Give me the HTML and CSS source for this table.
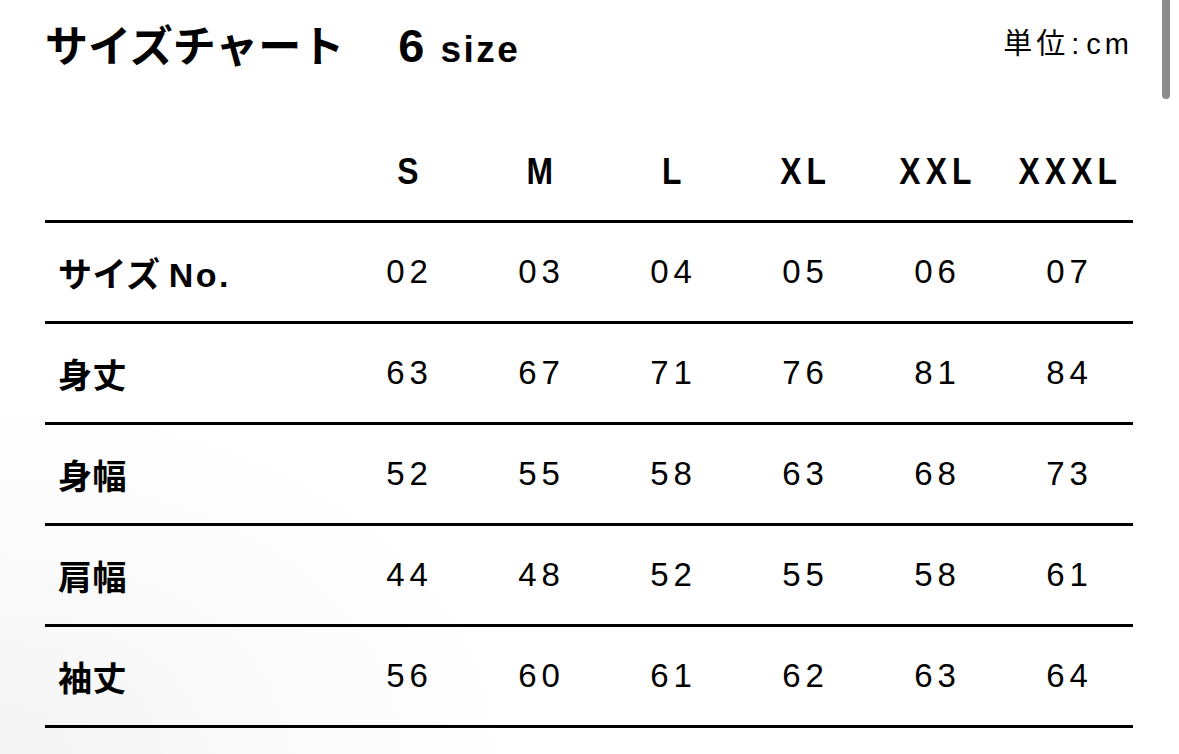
FILE: index.html
```html
<!DOCTYPE html>
<html lang="ja">
<head>
<meta charset="utf-8">
<title>サイズチャート</title>
<link rel="stylesheet" href="styles.css">
</head>
<body>
<div class="page">
  <header class="title-row">
    <h1 class="title"><span class="title-jp">サイズチャート</span><span class="title-count">6</span><span class="title-size">size</span></h1>
    <div class="unit">単位<span class="colon">:</span>cm</div>
  </header>
  <div class="chart">
    <div class="row head">
      <div class="label"></div>
      <div class="cell"><span class="narrow">S</span></div>
      <div class="cell"><span class="narrow">M</span></div>
      <div class="cell"><span class="narrow">L</span></div>
      <div class="cell"><span class="narrow">XL</span></div>
      <div class="cell"><span class="narrow">XXL</span></div>
      <div class="cell"><span class="narrow">XXXL</span></div>
    </div>
    <div class="row">
      <div class="label">サイズ <span class="latin">No.</span></div>
      <div class="cell">02</div>
      <div class="cell">03</div>
      <div class="cell">04</div>
      <div class="cell">05</div>
      <div class="cell">06</div>
      <div class="cell">07</div>
    </div>
    <div class="row">
      <div class="label">身丈</div>
      <div class="cell">63</div>
      <div class="cell">67</div>
      <div class="cell">71</div>
      <div class="cell">76</div>
      <div class="cell">81</div>
      <div class="cell">84</div>
    </div>
    <div class="row">
      <div class="label">身幅</div>
      <div class="cell">52</div>
      <div class="cell">55</div>
      <div class="cell">58</div>
      <div class="cell">63</div>
      <div class="cell">68</div>
      <div class="cell">73</div>
    </div>
    <div class="row">
      <div class="label">肩幅</div>
      <div class="cell">44</div>
      <div class="cell">48</div>
      <div class="cell">52</div>
      <div class="cell">55</div>
      <div class="cell">58</div>
      <div class="cell">61</div>
    </div>
    <div class="row">
      <div class="label">袖丈</div>
      <div class="cell">56</div>
      <div class="cell">60</div>
      <div class="cell">61</div>
      <div class="cell">62</div>
      <div class="cell">63</div>
      <div class="cell">64</div>
    </div>
  </div>
  <div class="scrollbar"></div>
</div>
</body>
</html>
```

FILE: styles.css
```css
html, body {
  margin: 0;
  padding: 0;
}
body {
  width: 1179px;
  height: 754px;
  overflow: hidden;
  font-family: "Liberation Sans", "Noto Sans CJK JP", sans-serif;
  color: #000;
  background:
    radial-gradient(ellipse 520px 360px at 0% 100%, rgba(0,0,0,0.045), rgba(0,0,0,0) 100%),
    #fff;
}
.page {
  position: relative;
  height: 754px;
  padding: 0 46px 0 45px;
  box-sizing: border-box;
}
.title-row {
  display: flex;
  justify-content: space-between;
  align-items: flex-start;
  height: 124px;
}
.title {
  margin: 0;
  padding-top: 19px;
  line-height: 48px;
  font-weight: bold;
  display: flex;
  align-items: baseline;
}
.title-jp {
  font-size: 43px;
  font-family: "Noto Sans CJK JP", sans-serif;
  font-weight: 700;
}
.title-count {
  font-size: 47px;
  margin-left: 54px;
}
.title-size {
  font-size: 37px;
  margin-left: 16px;
  letter-spacing: 2.5px;
}
.unit {
  padding-top: 24px;
  line-height: 40px;
  font-size: 29px;
  letter-spacing: 4px;
  margin-right: 0;
}
.unit .colon {
  margin: 0 3px 0 2px;
}
.chart {
  display: flex;
  flex-direction: column;
}
.row {
  display: grid;
  grid-template-columns: 296px repeat(6, 132px);
  align-items: center;
  height: 98px;
  border-bottom: 3px solid #000;
}
.row.head {
  height: 96px;
}
.label {
  padding-left: 13px;
  font-size: 34px;
  font-weight: bold;
  font-family: "Noto Sans CJK JP", sans-serif;
  letter-spacing: 0.5px;
}
.label .latin {
  font-family: "Liberation Sans", sans-serif;
  letter-spacing: 2.5px;
}
.cell {
  text-align: center;
  font-size: 33px;
  letter-spacing: 5px;
  padding-left: 5px;
}
.head .cell {
  font-weight: bold;
  font-size: 37px;
  letter-spacing: 6px;
  padding-left: 6px;
}
.narrow {
  display: inline-block;
  transform: scaleX(0.86);
}
.scrollbar {
  position: absolute;
  top: -6px;
  right: 9px;
  width: 8px;
  height: 105px;
  border-radius: 4px;
  background: #8c8c8c;
}
```
